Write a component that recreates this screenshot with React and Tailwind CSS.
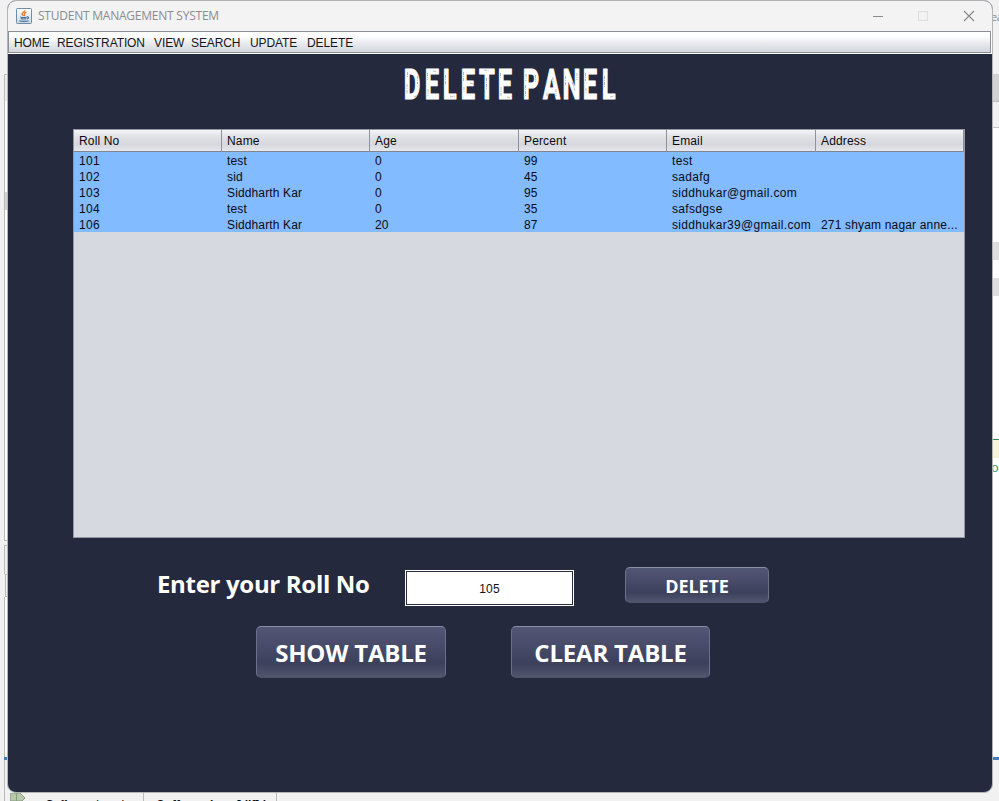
import React from 'react';

const menus = [
  ['HOME', 'w-[43px]'],
  ['REGISTRATION', 'w-[97px]'],
  ['VIEW', 'w-[37px]'],
  ['SEARCH', 'w-[59px]'],
  ['UPDATE', 'w-[57px]'],
  ['DELETE', 'w-[60px]'],
];

const columns = ['Roll No', 'Name', 'Age', 'Percent', 'Email', 'Address'];

const rows = [
  ['101', 'test', '0', '99', 'test', ''],
  ['102', 'sid', '0', '45', 'sadafg', ''],
  ['103', 'Siddharth Kar', '0', '95', 'siddhukar@gmail.com', ''],
  ['104', 'test', '0', '35', 'safsdgse', ''],
  ['106', 'Siddharth Kar', '20', '87', 'siddhukar39@gmail.com', '271 shyam nagar anne...'],
];

const cellSpacing = ['tracking-[0.3px]', 'tracking-[0.13px]', 'tracking-[0.2px]', 'tracking-normal', 'tracking-[0.33px]', 'tracking-[0.17px]'];

function JavaIcon() {
  return (
    <svg className="mb-px" width="16" height="16" viewBox="0 0 16 16" fill="none">
      <defs>
        <linearGradient id="jv" x1="0" y1="0" x2="0" y2="1">
          <stop offset="0" stopColor="#fdfdfe" />
          <stop offset="1" stopColor="#c9d9e6" />
        </linearGradient>
      </defs>
      <rect x=".5" y=".5" width="15" height="15" rx=".8" fill="url(#jv)" stroke="#6f8ba5" />
      <path d="M8.800 2.400c.5 1.500-3 2.200-2.800 3.700.2.900 1.200 1.200 1.500 1.900M10.500 4.200c-1.700.6-2.500 1.300-2 2.200.4.600.3 1-.3 1.500" stroke="#e37b28" strokeWidth="1.300" />
      <path d="M4.300 8.900c1.500.5 5 .5 6.500 0M4.800 10.600c1.500.4 4.300.4 5.600 0M11 8.900c2.200-.4 2 1.600.2 2M3.300 12.700c2 .9 7 .9 9.300 0" stroke="#456f94" strokeWidth="1.100" />
    </svg>
  );
}

function WindowControls() {
  return (
    <svg className="mb-px" width="102" height="14" viewBox="0 0 102 14" fill="none">
      <path d="M0 7.500h10" stroke="#8b8b8b" />
      <rect x="45.500" y="2.500" width="9" height="9" stroke="#dedede" />
      <path d="M91 2l10 10M101 2L91 12" stroke="#888" strokeWidth="1.100" />
    </svg>
  );
}

// Condensed, worn poster lettering: glyph positions are in screen pixels.
const titleGlyphs = [
  ['D', 403.700], ['E', 424.800], ['L', 442.800], ['E', 460.800], ['T', 479], ['E', 497.800],
  ['P', 522.800], ['A', 543], ['N', 562.600], ['E', 582.800], ['L', 601.800],
];
const scratches = 'M407.500 72v5M407 84v10M414 97l4-2M417.500 76v8M427.500 73v7M428 89v7M433 71l4 1M445.500 75v10M450 97l5-1M463.500 72v9M464 87v6M470 83l4 1M484 70l5 1M486.500 78v11M500.500 73v6M501 87v9M507 97l3 1M525.500 85v11M526 74v7M535.500 75v7M547 93v4M553 77v6M556 89v7M565.500 76v10M572 82l3 9M577 73v7M585.500 73v8M586 88v6M604.500 76v11M610 97l4-1';

function Title() {
  return (
    <svg className="block shrink-0" width="984" height="74" viewBox="8 54 984 74">
      {titleGlyphs.map(([g, x], i) => (
        <text
          key={i}
          transform={`translate(${x} 99) scale(.6 1)`}
          fontFamily="Roboto, sans-serif"
          fontWeight="700"
          fontSize="42.500"
          fill="#fff"
          stroke="#fff"
          strokeWidth="1.200"
          strokeLinejoin="round"
        >
          {g}
        </text>
      ))}
      <path d={scratches} stroke="#24293d" strokeOpacity=".42" strokeWidth=".8" strokeDasharray="3 .8 1 1.200" fill="none" />
    </svg>
  );
}

function Button({ className, textClass, children }) {
  return (
    <button
      className={`flex items-center justify-center rounded-[5px] border border-x-[#6c718a] border-t-[#8b90a6] border-b-[#4c5268] bg-[linear-gradient(#525675_0%,#464966_45%,#3d405b_72%,#4b506b_94%,#51566d_100%)] font-['Open_Sans',sans-serif] font-bold text-white whitespace-nowrap ${className}`}
    >
      <span className={textClass}>{children}</span>
    </button>
  );
}

function LeftDesktop() {
  return (
    <div className="flex w-[7px] shrink-0 flex-col items-end bg-[#f1f1f1] pt-[74px]">
      <div className="h-[27px] w-[3px] border-t border-l border-[#bbb] bg-[#ececec]" />
      <div className="h-[91px] w-[3px] border-l border-[#bbb] bg-white" />
      <div className="h-[18px] w-[3px] border-l border-[#bbb] bg-[#d2d2d2]" />
      <div className="h-[331px] w-[3px] border-b border-l border-[#bbb] bg-white" />
      <div className="mt-1 h-[29px] w-[3px] border-t border-l border-[#bbb] bg-[#efefef]" />
      <div className="h-[23px] w-[2px] border-y border-l border-[#bbb] bg-[#efefef]" />
      <div className="h-[160px] w-[3px] border-l border-[#bbb] bg-white" />
      <div className="h-[3px] w-[3px] bg-[#4580b8]" />
      <div className="h-[33px] w-[3px] border-l border-[#bbb]" />
    </div>
  );
}

function RightDesktop() {
  return (
    <div className="flex w-[6px] shrink-0 flex-col overflow-hidden bg-white">
      <div className="h-[74px] bg-[#f1f1f1] pt-[9px] font-['Open_Sans',sans-serif] text-[11px] leading-[15px] text-[#8a8a8a]">
        <span className="-ml-[2px] tracking-[-0.5px]">ea</span>
      </div>
      <div className="h-[28px] border-b border-[#bbb] bg-[#d2d2d2]" />
      <div className="h-[26px] border-b border-[#c4c4c4] bg-[#f1f1f1]" />
      <div className="mt-[114px] h-[18px] bg-[#dedede]" />
      <div className="mt-[18px] h-[18px] bg-[#dedede]" />
      <div className="mt-[143px] h-px bg-[#2f8a5b]" />
      <div className="h-[18px] bg-[#f7f2d9]" />
      <div className="h-[20px] pt-px font-['Liberation_Mono',monospace] text-[13px] leading-[20px] text-[#2f9a5f]">
        <span className="-ml-[2px]">o</span>
      </div>
      <div className="mt-[279px] h-[3px] bg-[#4580b8]" />
      <div className="grow bg-[#f1f1f1]" />
    </div>
  );
}

export default function App() {
  return (
    <div className="flex h-[801px] w-[999px] flex-col overflow-hidden bg-[#f1f1f1]">
      <div className="flex h-[793px] shrink-0">
        <LeftDesktop />
        <main className="flex w-[986px] shrink-0 flex-col overflow-hidden rounded-[9px] border border-[#b4b4b4] bg-[#24293d]">
          <header className="flex h-[30px] shrink-0 items-center bg-[#f3f3f3] pl-2">
            <JavaIcon />
            <span className="ml-[6px] font-['Open_Sans',sans-serif] text-[12px] tracking-[-0.23px] whitespace-nowrap text-[#8c8c8c]">STUDENT MANAGEMENT SYSTEM</span>
            <div className="mr-[17px] ml-auto">
              <WindowControls />
            </div>
          </header>
          <nav className="flex h-[23px] shrink-0 flex-col border-b border-white bg-white pr-px">
            <div className="flex h-[22px] items-center border border-[#8d8f97] bg-[linear-gradient(#ffffff_20%,#eceef1_50%,#d3d6dc_100%)] pt-[2px] pl-[5px] font-['Liberation_Sans',Arial,sans-serif] text-[12px] leading-[18px] tracking-[-0.1px] text-[#16161a]">
              {menus.map(([label, w]) => (
                <span key={label} className={`shrink-0 whitespace-nowrap ${w}`}>{label}</span>
              ))}
            </div>
          </nav>
          <Title />
          <section className="mt-px ml-[65px] h-[409px] w-[892px] shrink-0 border border-[#9297a3] bg-[#d6d9e0] font-['Liberation_Sans',Arial,sans-serif] text-[12px] text-[#0a0a12]">
            <div className="grid h-[22px] grid-cols-[148px_148px_149px_148px_149px_148px] border-b border-[#7f848f] bg-[linear-gradient(#f4f5f7_0%,#e0e1e5_35%,#d6d8de_70%,#e6e8ec_100%)]">
              {columns.map((c) => (
                <div key={c} className="border-r border-[#8f939d] pl-[5px] leading-[22px] tracking-[0.15px]">{c}</div>
              ))}
            </div>
            {rows.map((r) => (
              <div key={r[0]} className="grid h-4 grid-cols-[148px_148px_149px_148px_149px_148px] bg-[#82bbff]">
                {r.map((v, i) => (
                  <div key={i} className={`pl-[5px] leading-[18px] whitespace-nowrap ${cellSpacing[i]}`}>{v}</div>
                ))}
              </div>
            ))}
          </section>
          <div className="mt-[29px] flex h-[39px] shrink-0 items-start pl-[149px]">
            <label className="w-[248px] font-['Open_Sans',sans-serif] text-[24px] leading-[34px] font-bold tracking-[-0.32px] whitespace-nowrap text-white">Enter your Roll No</label>
            <div className="mt-[3px] h-[36px] w-[169px] border border-white p-px">
              <div className="flex h-full items-center justify-center bg-white pt-[2px] font-['Liberation_Sans',Arial,sans-serif] text-[12px] leading-[18px] tracking-[0.2px] text-[#111]">105</div>
            </div>
            <Button className="ml-[51px] h-[36px] w-[144px]" textClass="text-[18px] leading-none pt-[1px] tracking-[-0.1px]">DELETE</Button>
          </div>
          <div className="mt-[20px] flex gap-[65px] pl-[248px]">
            <Button className="h-[52px] w-[190px]" textClass="text-[24px] leading-none pt-[1px] tracking-[-0.2px]">SHOW TABLE</Button>
            <Button className="h-[52px] w-[199px]" textClass="text-[24px] leading-none pt-[1px] tracking-[-0.2px]">CLEAR TABLE</Button>
          </div>
        </main>
        <RightDesktop />
      </div>
      <footer className="flex h-2 shrink-0 overflow-hidden border-l border-[#f1f1f1] pl-[3px] font-['Liberation_Sans',Arial,sans-serif] text-[12px] leading-[14px] font-bold text-[#111]">
        <div className="flex w-[140px] border-r border-l border-[#bbb]">
          <svg className="ml-[5px] shrink-0" width="16" height="8" viewBox="0 0 16 8">
            <path d="M0 0H10L15 5L12 8H0Z" fill="#b7c9ad" stroke="#879b7d" />
            <path d="M6.500 0V8" stroke="#879b7d" />
          </svg>
          <span className="ml-[19px] pt-[5px] font-normal">Coffee...sieve.java</span>
        </div>
        <div className="w-[133px] border-r border-[#bbb] pt-[5px] pl-[12px] whitespace-nowrap">Coffee...sieve [dlf].java</div>
      </footer>
    </div>
  );
}
